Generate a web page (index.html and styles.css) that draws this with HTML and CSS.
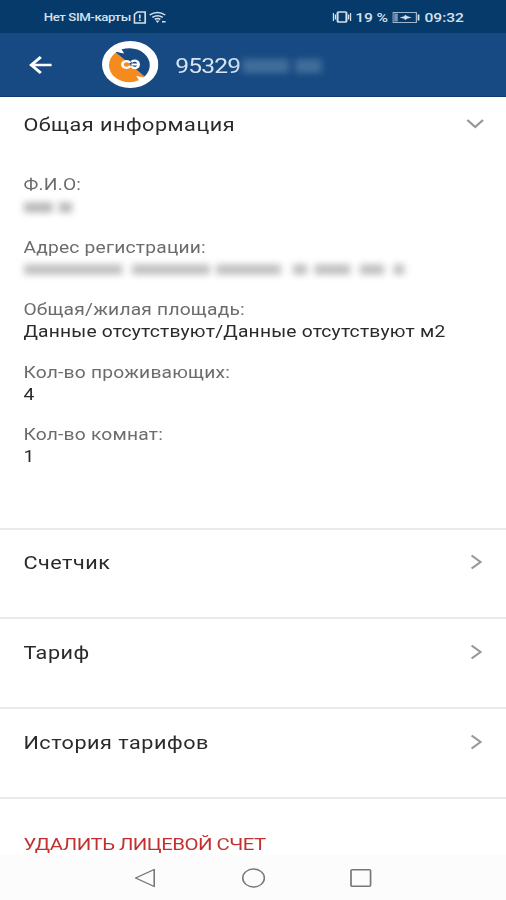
FILE: index.html
```html
<!DOCTYPE html>
<html lang="ru">
<head>
    <meta charset="UTF-8">
    <meta name="viewport" content="width=device-width, initial-scale=1.0">
    <title>Лицевой счет</title>
    <link rel="stylesheet" href="styles.css">
</head>
<body>
<div class="screen">
    <div class="status-bar">
        <div class="status-left">
            <span class="status-sim">Нет SIM-карты</span>
            <svg class="icon-sim" width="11" height="13" viewBox="0 0 11 13">
                <path d="M1 3.500 3.500 1H10v11H1z" fill="none" stroke="currentColor" stroke-width="1.400"/>
                <path d="M5.500 3.500v4M5.500 8.500v1.500" stroke="currentColor" stroke-width="1.400"/>
            </svg>
            <svg class="icon-wifi" width="15" height="13" viewBox="0 0 15 13">
                <path d="M.7 4q6.500-5 13 0M3 6.300q4.300-3.300 8.600 0M5 8.400q2.300-1.800 4.600 0" fill="none" stroke="currentColor" stroke-width="1.500"/>
                <path d="M5.600 9.600H9L7.300 12zM11 10h3v1.500h-3z" fill="currentColor"/>
            </svg>
        </div>
        <div class="status-right">
            <svg class="icon-vibrate" width="16" height="12" viewBox="0 0 16 12">
                <rect x="4.300" y="1" width="7.400" height="10" rx="1" fill="none" stroke="currentColor" stroke-width="1.700"/>
                <path d="M.8 2v8M2.500 3.500v5M15.200 2v8M13.500 3.500v5" fill="none" stroke="currentColor" stroke-width="1.100"/>
            </svg>
            <span class="status-percent">19 %</span>
            <svg class="icon-battery" width="23" height="11" viewBox="0 0 23 11">
                <rect x=".5" y=".5" width="19.500" height="10" fill="none" stroke="currentColor" opacity=".75"/>
                <path d="M1.500 1.500h3v8h-3z" fill="currentColor" opacity=".55"/>
                <path d="M6 5.500 10 4.300 10.500 2.800 12.500 4.300 16 5.500 12 6.700 10.500 8.300 10 6.700z" fill="currentColor"/>
                <path d="M21 2.500h1.500v6H21z" fill="currentColor"/>
            </svg>
            <span class="status-time">09:32</span>
        </div>
    </div>

    <header class="header">
        <svg class="icon-back" width="20" height="20" viewBox="0 0 20 20">
            <path d="M19 10H2M10 2 2 10l8 8" fill="none" stroke="currentColor" stroke-width="2.500"/>
        </svg>
        <svg class="logo" width="47" height="47" viewBox="0 0 47 47">
            <circle cx="23.500" cy="23.500" r="23.500" fill="#fff"/>
            <path d="M11.500 11.500 35.500 35.500A17 17 0 1 1 11.500 11.500z" fill="#f38b1e"/>
            <path d="M11.500 11.500A17 17 0 0 1 35.500 35.500z" fill="#174a83"/>
            <path d="M12 10.500 15 6l3.500 6.500-3.500-.8zM36.500 37l-4.500 4.500-3.500-6.500 3.500.8z" fill="#fff"/>
            <path d="M23.500 22c-2-3-6.500-2-6.500 1.500s4.500 4.500 6.500 1.500M24.500 21c2-2.500 6-1.500 6 2.500s-4 4.500-6 2M24.500 23.500h5.500" fill="none" stroke="#fff" stroke-width="2.200"/>
        </svg>
        <div class="account">
            <span>95329</span>
            <span class="account-hidden"><i class="blob"></i><i class="blob"></i></span>
        </div>
    </header>

    <main class="content">
        <section class="info">
            <div class="info-title">
                <h1 class="title">Общая информация</h1>
                <svg class="icon-down" width="16" height="10" viewBox="0 0 16 10">
                    <path d="m1.500 1 6.500 7 6.500-7" fill="none" stroke="currentColor" stroke-width="1.900"/>
                </svg>
            </div>
            <dl class="fields">
                <div class="field">
                    <dt>Ф.И.О:</dt>
                    <dd class="masked masked-name"><i class="blob"></i><i class="blob"></i></dd>
                </div>
                <div class="field">
                    <dt>Адрес регистрации:</dt>
                    <dd class="masked masked-address"><i class="blob"></i><i class="blob"></i><i class="blob"></i><i class="blob"></i><i class="blob"></i><i class="blob"></i><i class="blob"></i></dd>
                </div>
                <div class="field">
                    <dt>Общая/жилая площадь:</dt>
                    <dd>Данные отсутствуют/Данные отсутствуют м2</dd>
                </div>
                <div class="field">
                    <dt>Кол-во проживающих:</dt>
                    <dd>4</dd>
                </div>
                <div class="field">
                    <dt>Кол-во комнат:</dt>
                    <dd>1</dd>
                </div>
            </dl>
        </section>

        <a class="row">
            <span class="title">Счетчик</span>
            <svg width="10" height="16" viewBox="0 0 10 16"><path d="m1 1.500 7.500 6.500L1 14.500" fill="none" stroke="currentColor" stroke-width="1.900"/></svg>
        </a>
        <a class="row">
            <span class="title">Тариф</span>
            <svg width="10" height="16" viewBox="0 0 10 16"><path d="m1 1.500 7.500 6.500L1 14.500" fill="none" stroke="currentColor" stroke-width="1.900"/></svg>
        </a>
        <a class="row">
            <span class="title">История тарифов</span>
            <svg width="10" height="16" viewBox="0 0 10 16"><path d="m1 1.500 7.500 6.500L1 14.500" fill="none" stroke="currentColor" stroke-width="1.900"/></svg>
        </a>
        <div class="row row-delete">
            <span class="delete">УДАЛИТЬ ЛИЦЕВОЙ СЧЕТ</span>
        </div>
    </main>

    <nav class="nav-bar">
        <svg width="20" height="20" viewBox="0 0 20 20"><path d="M17.500 1.500v17L2 10z" fill="none" stroke="currentColor" stroke-width="1.300" stroke-linejoin="round"/></svg>
        <svg width="20" height="20" viewBox="0 0 20 20"><circle cx="10.300" cy="10" r="9" fill="none" stroke="currentColor" stroke-width="1.300"/></svg>
        <svg width="20" height="20" viewBox="0 0 20 20"><rect x="2.500" y="1.700" width="16.300" height="16.500" rx="1" fill="none" stroke="currentColor" stroke-width="1.400"/></svg>
    </nav>
</div>
</body>
</html>
```
FILE: styles.css
```css
:root {
    --status-color: #053a6b;
    --header-color: #174a83;
    --text-color: #2a2a2a;
    --label-color: #6c6c6c;
    --danger-color: #c23030;
    --line-color: #e9e9e9;
}

* {
    margin: 0;
    padding: 0;
    box-sizing: border-box;
}

body {
    font-family: Roboto, sans-serif;
    background: #fff;
    color: var(--text-color);
    overflow: hidden;
}

/* everything on the screen is 1.2 times wider than tall */
.screen {
    width: 421.67px;
    height: 900px;
    display: flex;
    flex-direction: column;
    overflow: hidden;
    transform: scaleX(1.2);
    transform-origin: 0 0;
}

svg {
    display: block;
    flex-shrink: 0;
}

.status-bar {
    height: 33px;
    flex-shrink: 0;
    display: flex;
    justify-content: space-between;
    align-items: center;
    padding: 1px 35px 0 36.5px;
    background: var(--status-color);
    color: #d5e0ec;
    font-size: 11px;
    white-space: nowrap;
}

.status-left,
.status-right {
    display: flex;
    align-items: center;
}

.status-sim {
    font-weight: 500;
    letter-spacing: -0.35px;
}

.icon-sim {
    margin: 0 2px 0 1.5px;
}

.status-right {
    font-size: 13px;
    font-weight: 500;
}

.icon-vibrate {
    margin-right: 2.5px;
}

.status-percent {
    letter-spacing: -0.1px;
}

.icon-battery {
    margin: 0 3.5px 0 4px;
}

.header {
    height: 64px;
    flex-shrink: 0;
    display: flex;
    align-items: center;
    padding-left: 23.5px;
    background: var(--header-color);
    border-bottom: 1px solid #0c3b70;
    color: #fff;
}

.logo {
    margin-left: 41px;
}

.account {
    display: flex;
    align-items: center;
    margin-left: 14.5px;
    padding-top: 3px;
    font-size: 20.5px;
    color: #d9e4f0;
    letter-spacing: -0.7px;
}

.account-hidden {
    display: flex;
    gap: 5px;
    margin-left: 2px;
}

.blob {
    display: block;
    height: 11px;
    background: #bdbdbd;
    filter: blur(3px);
}

.account-hidden .blob {
    width: 39px;
    height: 14px;
    background: #416d9a;
}

.account-hidden .blob:last-child {
    width: 22px;
}

.content {
    flex: 1;
    overflow: hidden;
}

.info {
    height: 430.7px;
    padding: 15px 20px 0 19.5px;
}

.info-title {
    display: flex;
    justify-content: space-between;
    align-items: center;
    height: 24px;
    color: #999;
}

.icon-down {
    margin-right: -2.5px;
}

.title {
    font-size: 18px;
    font-weight: 400;
    color: var(--text-color);
    letter-spacing: 0.43px;
}

.fields {
    padding-top: 38px;
}

.field {
    height: 62.5px;
    font-size: 16px;
    line-height: 22px;
    letter-spacing: 0.18px;
    white-space: nowrap;
}

.field dt {
    color: var(--label-color);
}

.masked {
    display: flex;
    align-items: center;
    height: 22px;
    gap: 5px;
}

.masked-name .blob {
    width: 24px;
}

.masked-name .blob:last-child {
    width: 11px;
}

.masked-address .blob {
    width: 82px;
    background: #c4c4c4;
}

.masked-address .blob:nth-child(2) {
    width: 65px;
    margin-left: 3px;
}

.masked-address .blob:nth-child(3) {
    width: 54px;
}

.masked-address .blob:nth-child(4) {
    width: 12px;
    margin-left: 5px;
}

.masked-address .blob:nth-child(5) {
    width: 30px;
    margin-left: 1px;
}

.masked-address .blob:nth-child(6) {
    width: 20px;
    margin-left: 3px;
}

.masked-address .blob:nth-child(7) {
    width: 9px;
    margin-left: 3px;
}

.row {
    display: flex;
    justify-content: space-between;
    align-items: flex-start;
    height: 89.7px;
    padding: 22.5px 20px 0 19.5px;
    border-top: 2px solid var(--line-color);
    color: #999;
}

.row svg {
    margin-top: 2px;
}

.row-delete {
    padding-top: 35px;
}

.delete {
    font-size: 17px;
    letter-spacing: -0.45px;
    color: var(--danger-color);
}

.nav-bar {
    height: 45px;
    flex-shrink: 0;
    display: flex;
    justify-content: center;
    gap: 69.5px;
    padding-top: 13px;
    background: #fcfcfc;
    color: #777;
}
```
